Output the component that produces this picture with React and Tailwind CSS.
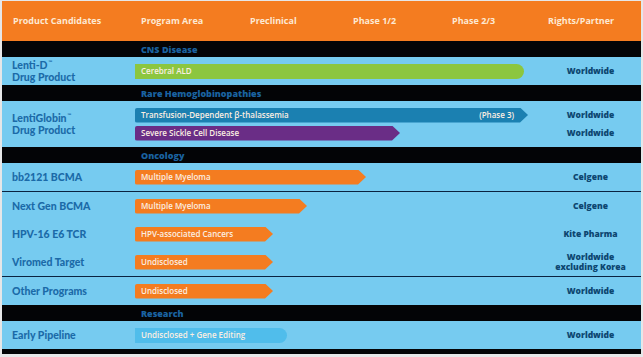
import React from "react";

const FONT = "[font-family:'Open_Sans','Liberation_Sans',sans-serif]";
const ARROW = "[clip-path:polygon(0_0,calc(100%-8px)_0,100%_50%,calc(100%-8px)_100%,0_100%)]";

function Bar({ w, color, children, shape = "arrow", right }) {
  const shapeCls = shape === "arrow" ? ARROW : "rounded-r-full";
  return (
    <div
      className={`h-[15px] flex items-center justify-between pl-[6px] pr-[14px] rounded-l-[2px] text-[8px] font-semibold text-[#fbeee2] whitespace-nowrap ${color} ${shapeCls}`}
      style={{ width: w }}
    >
      <span>{children}</span>
      {right ? <span>{right}</span> : null}
    </div>
  );
}

function Section({ label }) {
  return (
    <div className="h-[16px] bg-[#030406] flex items-center">
      <div className="w-[133px]" />
      <span className="pl-[6px] text-[9px] font-extrabold text-[#1a62a0] leading-none">{label}</span>
    </div>
  );
}

function Name({ children }) {
  return (
    <div className="w-[133px] pl-[10px] text-[10.5px] font-black text-[#1b6aa8] leading-[12px] [font-family:'Lato','Open_Sans',sans-serif]">
      {children}
    </div>
  );
}

function Rights({ children }) {
  return (
    <div className="w-[101px] text-center text-[8.5px] font-extrabold text-[#0d4670] leading-[10px]">
      {children}
    </div>
  );
}

function Row({ h, name, bars, rights }) {
  return (
    <div className="flex items-center bg-[#76cbf0]" style={{ height: h }}>
      <Name>{name}</Name>
      <div className="flex-1 flex flex-col gap-[3px]">{bars}</div>
      <div className="w-[101px] flex flex-col gap-[8px]">{rights}</div>
    </div>
  );
}

function TwoLine({ first }) {
  return (
    <div className="flex flex-col">
      <div className="flex items-start">
        <span>{first}</span>
        <span className="text-[5px] leading-[6px] ml-[1px]">™</span>
      </div>
      <span>Drug Product</span>
    </div>
  );
}

export default function App() {
  return (
    <div className={`w-[643px] h-[357px] bg-[#e6e7e8] pl-[2px] pr-[2px] pt-[1px] pb-[3px] ${FONT}`}>
      <div className="flex flex-col h-full">
        {/* Header */}
        <div className="h-[40px] bg-[#f47c20] flex items-center text-[9px] font-bold text-[#fde9d3] whitespace-nowrap">
          <span className="w-[139px] pl-[11px]">Product Candidates</span>
          <span className="w-[109px]">Program Area</span>
          <span className="w-[103px]">Preclinical</span>
          <span className="w-[99px]">Phase 1/2</span>
          <span className="w-[96px]">Phase 2/3</span>
          <span>Rights/Partner</span>
        </div>

        <Section label="CNS Disease" />
        <Row
          h={28}
          name={<TwoLine first="Lenti-D" />}
          bars={<Bar w={389} color="bg-[#8cc63f]" shape="round">Cerebral ALD</Bar>}
          rights={<Rights>Worldwide</Rights>}
        />

        <Section label="Rare Hemoglobinopathies" />
        <Row
          h={46}
          name={<TwoLine first="LentiGlobin" />}
          bars={
            <>
              <Bar w={393} color="bg-[#1b80b1]" right="(Phase 3)">Transfusion-Dependent β-thalassemia</Bar>
              <Bar w={265} color="bg-[#6a2d86]">Severe Sickle Cell Disease</Bar>
            </>
          }
          rights={
            <>
              <Rights>Worldwide</Rights>
              <Rights>Worldwide</Rights>
            </>
          }
        />

        <Section label="Oncology" />
        <Row
          h={28}
          name="bb2121 BCMA"
          bars={<Bar w={231} color="bg-[#f47c20]">Multiple Myeloma</Bar>}
          rights={<Rights>Celgene</Rights>}
        />
        <div className="h-[1px] bg-[#0a2340]" />
        <Row
          h={28}
          name="Next Gen BCMA"
          bars={<Bar w={172} color="bg-[#f47c20]">Multiple Myeloma</Bar>}
          rights={<Rights>Celgene</Rights>}
        />
        <Row
          h={28}
          name="HPV-16 E6 TCR"
          bars={<Bar w={138} color="bg-[#f47c20]">HPV-associated Cancers</Bar>}
          rights={<Rights>Kite Pharma</Rights>}
        />
        <Row
          h={28}
          name="Viromed Target"
          bars={<Bar w={138} color="bg-[#f47c20]">Undisclosed</Bar>}
          rights={<Rights>Worldwide<br />excluding Korea</Rights>}
        />
        <div className="h-[1px] bg-[#0a2340]" />
        <Row
          h={28}
          name="Other Programs"
          bars={<Bar w={138} color="bg-[#f47c20]">Undisclosed</Bar>}
          rights={<Rights>Worldwide</Rights>}
        />

        <Section label="Research" />
        <Row
          h={28}
          name="Early Pipeline"
          bars={<Bar w={152} color="bg-[#50bdeb]" shape="round">Undisclosed + Gene Editing</Bar>}
          rights={<Rights>Worldwide</Rights>}
        />
        <div className="flex-1 bg-[#030406]" />
      </div>
    </div>
  );
}
